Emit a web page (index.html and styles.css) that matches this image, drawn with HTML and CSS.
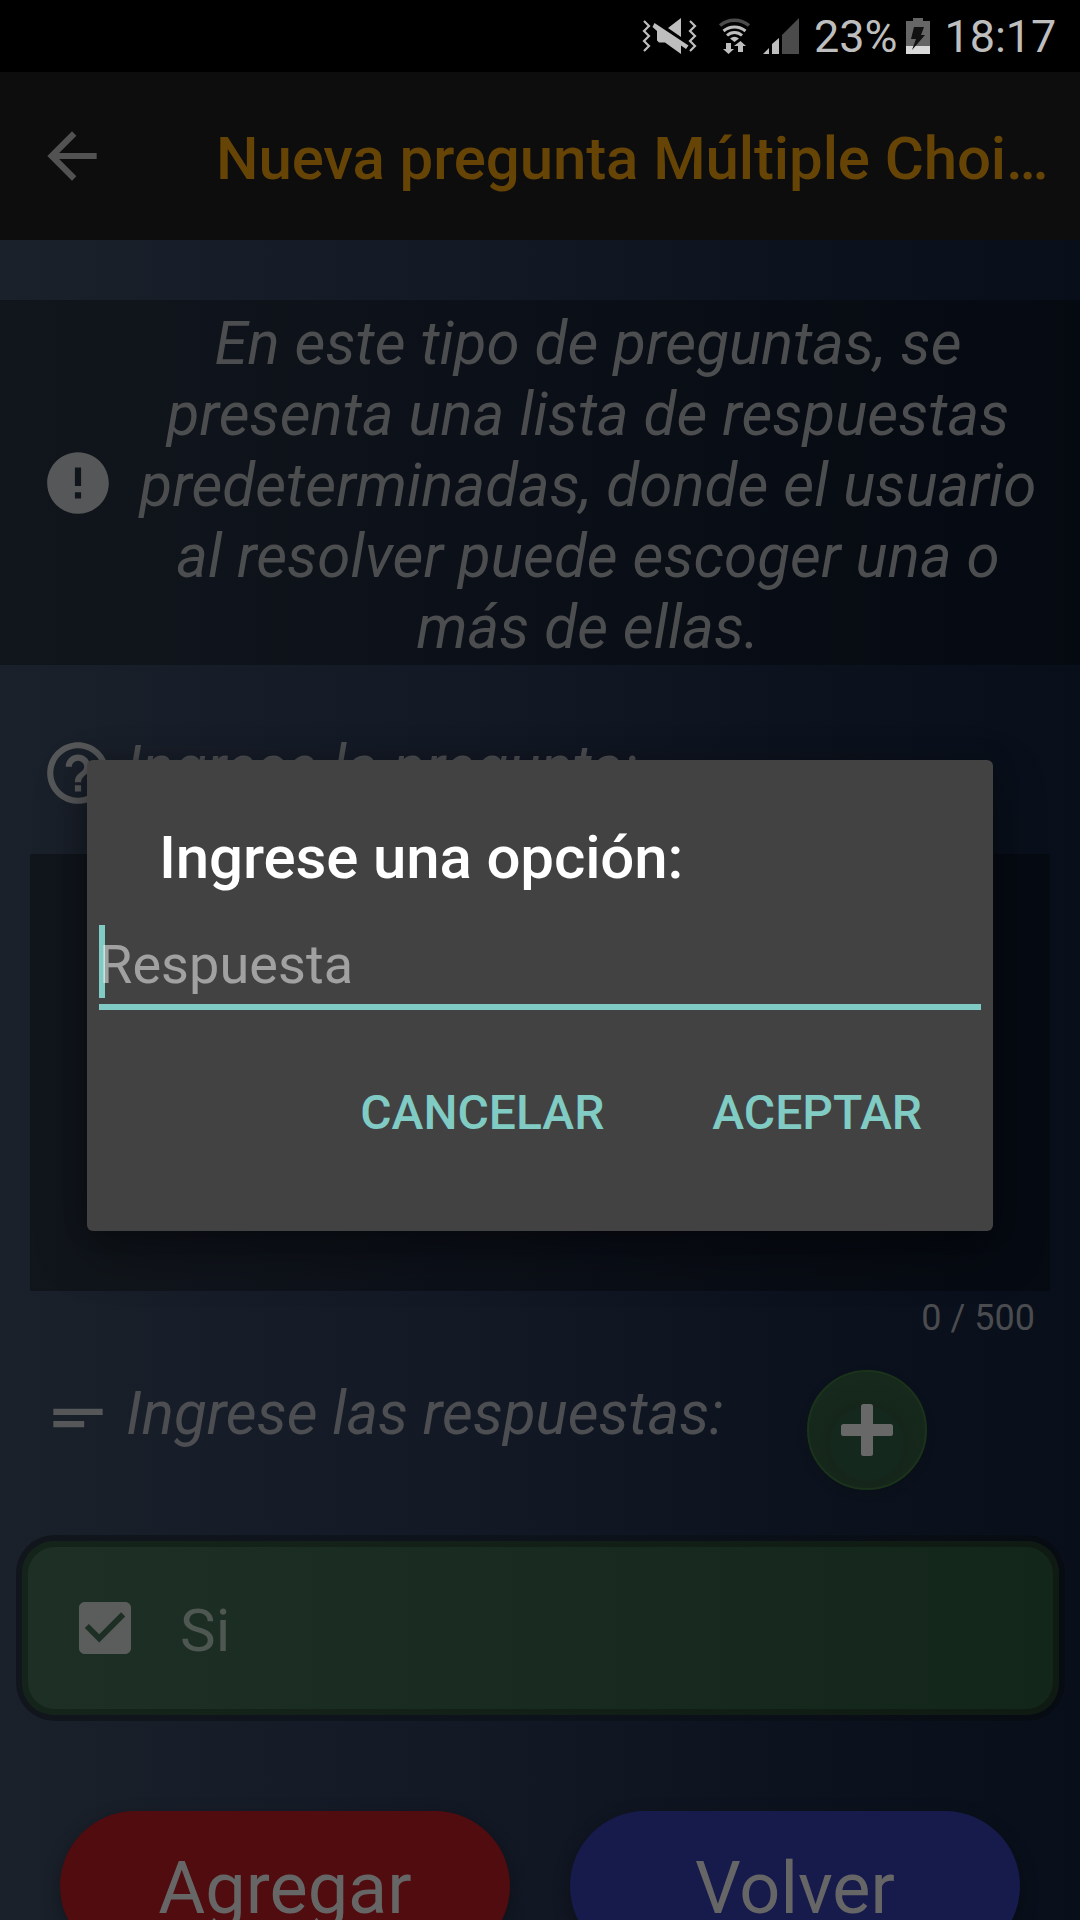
FILE: index.html
```
<!DOCTYPE html>
<html lang="es">
<head>
<meta charset="utf-8">
<title>Nueva pregunta</title>
<link rel="stylesheet" href="styles.css">
</head>
<body>
<div class="screen">
  <div class="status">
    <svg class="status-icons" width="182" height="40" viewBox="0 0 182 40">
      <g fill="none" stroke="#bebebe" stroke-width="2.2">
        <path d="M4 3l5 5-5 5 5 5-5 5 5 5-5 5"/>
        <path d="M50 3l5 5-5 5 5 5-5 5 5 5-5 5"/>
      </g>
      <path fill="#bebebe" d="M41 0v19L28 10zM14.500 5l34 22.500-2.500 3.500-5-3.500V36L25 24.500h-6l-2-2V13l-4.500-4z"/>
      <path d="M80 7.500a22.500 22.500 0 0 1 29 0" fill="none" stroke="#4b4b4b" stroke-width="3.500"/>
      <g fill="none" stroke="#bebebe" stroke-width="3">
        <path d="M83.500 13a17 17 0 0 1 22 0M87 17.500a11 11 0 0 1 15 0"/>
      </g>
      <path fill="#bebebe" d="M90 20.500q4.500-3.500 9 0L94.500 24zM86 25h5v6h3l-5.500 5-5.500-5h3zM98 34v-6h-4l6.500-5 5.500 5h-3v6z"/>
      <path fill="#bebebe" d="M123 36l6-6v6zM132 36V26l7-6v16z"/>
      <path fill="#4b4b4b" d="M142 36V17L159 0v36z"/>
    </svg>
    <span class="battery-text">23%</span>
    <svg class="battery" width="24" height="36" viewBox="0 0 24 36">
      <path fill="#666" d="M7 0h10v3h7v33H0V3h7z"/>
      <path fill="#dadada" d="M0 28h24v8H0z"/>
      <path fill="#111" d="M8 9h10l-3 8h4L6 32l4-11H5z"/>
    </svg>
    <span class="clock">18:17</span>
  </div>

  <header class="appbar">
    <svg class="back" viewBox="0 0 24 24"><path d="M20 11H7.830l5.590-5.590L12 4l-8 8 8 8 1.410-1.410L7.830 13H20v-2z"/></svg>
    <h1 class="appbar-title">Nueva pregunta Múltiple Choi…</h1>
  </header>

  <main class="content">
    <section class="info">
      <svg class="icon" viewBox="0 0 24 24"><path d="M12 2C6.480 2 2 6.480 2 12s4.480 10 10 10 10-4.480 10-10S17.520 2 12 2zm1 15h-2v-2h2v2zm0-4h-2V7h2v6z"/></svg>
      <p class="info-text">En este tipo de preguntas, se<br>presenta una lista de respuestas<br>predeterminadas, donde el usuario<br>al resolver puede escoger una o<br>más de ellas.</p>
    </section>

    <div class="field-head">
      <svg class="icon" viewBox="0 0 24 24"><path d="M11 18h2v-2h-2v2zm1-16C6.480 2 2 6.480 2 12s4.480 10 10 10 10-4.480 10-10S17.520 2 12 2zm0 18c-4.410 0-8-3.590-8-8s3.590-8 8-8 8 3.590 8 8-3.590 8-8 8zm0-14c-2.210 0-4 1.790-4 4h2c0-1.100.9-2 2-2s2 .9 2 2c0 2-3 1.750-3 5h2c0-2.250 3-2.500 3-5 0-2.210-1.790-4-4-4z"/></svg>
      <span class="label">Ingrese la pregunta:</span>
    </div>
    <div class="question-box"></div>
    <div class="counter">0 / 500</div>

    <div class="answers-head">
      <svg class="icon" viewBox="0 0 24 24"><path d="M4 9h16v2H4V9zm0 4h10v2H4v-2z"/></svg>
      <span class="label">Ingrese las respuestas:</span>
      <div class="fab">
        <svg width="54" height="54" viewBox="0 0 54 54"><rect x="21" y="1" width="12" height="52" rx="2.500"/><rect x="1" y="21" width="52" height="12" rx="2.500"/></svg>
      </div>
    </div>

    <div class="answer">
      <div class="answer-ring">
        <div class="answer-body">
          <svg class="check" viewBox="3 3 18 18"><path d="M19 3H5c-1.110 0-2 .9-2 2v14c0 1.100.89 2 2 2h14c1.110 0 2-.9 2-2V5c0-1.100-.89-2-2-2zm-9 14l-5-5 1.410-1.410L10 14.170l7.590-7.590L19 8l-9 9z"/></svg>
          <span class="answer-text">Si</span>
        </div>
      </div>
    </div>

    <div class="actions">
      <div class="btn btn-add">Agregar</div>
      <div class="btn btn-back">Volver</div>
    </div>
  </main>

  <div class="dialog">
    <h2 class="dialog-title">Ingrese una opción:</h2>
    <div class="input"><span class="caret"></span><span class="placeholder">Respuesta</span></div>
    <div class="dialog-actions">
      <span>CANCELAR</span>
      <span>ACEPTAR</span>
    </div>
  </div>
</div>
</body>
</html>
```
FILE: styles.css
```
* { box-sizing: border-box; margin: 0; padding: 0; }
body { background: #000; font-family: Roboto, sans-serif; }
.screen {
  position: relative;
  width: 1080px;
  height: 1920px;
  overflow: hidden;
  display: flex;
  flex-direction: column;
  white-space: nowrap;
}

.status {
  flex: none;
  height: 72px;
  display: flex;
  align-items: center;
  padding-left: 640px;
  background: #000;
  color: #bebebe;
  font-size: 45px;
}
.status-icons { flex: none; margin-top: 4px; margin-right: -8px; }
.battery-text { padding-top: 1px; }
.battery { margin-left: 8px; }
.clock { margin-left: 15px; padding-top: 1px; letter-spacing: -.1px; }

.appbar {
  flex: none;
  height: 168px;
  display: flex;
  align-items: center;
  background: #0d0d0d;
}
.back { width: 74px; height: 74px; margin-left: 35px; fill: #525252; }
.appbar-title {
  margin-left: 107px;
  padding-top: 5px;
  font-size: 60px;
  font-weight: 500;
  line-height: 70px;
  letter-spacing: -.11px;
  color: #664405;
}

.content {
  flex: 1;
  padding-top: 60px;
  background: linear-gradient(90deg, #1a212a 0%, #171d28 20%, #121824 46%, #0d131e 72%, #080f1a 100%);
}
.icon { flex: none; width: 74px; height: 74px; margin-left: 41px; fill: #565758; }
.info {
  height: 365px;
  display: flex;
  align-items: center;
  background: rgba(0, 0, 0, .32);
}
.info-text {
  width: 900px;
  margin-left: 23px;
  padding-top: 5px;
  text-align: center;
  font-size: 60px;
  font-style: italic;
  line-height: 71px;
  letter-spacing: .07px;
  color: #4c4d4f;
}
.label { font-size: 60px; font-style: italic; line-height: 70px; color: #4c4e51; margin-left: 11px; }
.field-head { height: 189px; display: flex; align-items: center; padding-top: 27px; }
.field-head .label { padding-bottom: 10px; }
.question-box { height: 437px; margin: 0 30px; background: rgba(0, 0, 0, .32); }
.counter { height: 79px; padding: 6px 45px 0 0; text-align: right; font-size: 36px; line-height: 42px; color: #4a4c50; }
.answers-head { height: 120px; display: flex; align-items: flex-start; }
.answers-head .icon { margin-top: 11px; }
.answers-head .label { margin-top: 9px; }
.fab {
  width: 120px;
  height: 120px;
  margin-left: auto;
  margin-right: 153px;
  border-radius: 50%;
  border: 2px solid #1b321b;
  background: radial-gradient(circle at 50% 62%, #15281e 0 36px, #15251a 38px, #16291c 66px);
  display: flex;
  align-items: center;
  justify-content: center;
  box-shadow: 0 4px 10px rgba(0, 0, 0, .15);
}
.fab svg { fill: #686868; }

.answer {
  height: 186px;
  margin: 45px 15px 0 16px;
  padding: 6px;
  border-radius: 38px;
  background: linear-gradient(90deg, #11161d, #0d131b 50%, #070c13);
}
.answer-ring { height: 174px; padding: 6px; border-radius: 32px; background: linear-gradient(90deg, #15241b, #0f1b12); }
.answer-body {
  height: 162px;
  border-radius: 27px;
  padding-left: 51px;
  display: flex;
  align-items: center;
  background: linear-gradient(90deg, #1e3025, #192b20 50%, #13261a);
}
.check { width: 52px; height: 52px; fill: #5a5d5b; }
.answer-text { margin-left: 49px; padding-top: 4px; font-size: 60px; color: #4f5752; }

.actions { display: flex; gap: 60px; padding: 90px 60px 0; }
.btn {
  flex: 1;
  height: 150px;
  border-radius: 75px;
  text-align: center;
  font-size: 72px;
  line-height: 156px;
  color: #666;
  box-shadow: 0 6px 18px rgba(0, 0, 0, .3);
}
.btn-add { background: #500c0f; }
.btn-back { background: #171b4c; }

.dialog {
  position: absolute;
  left: 87px;
  top: 760px;
  width: 906px;
  height: 471px;
  padding: 63px 12px 0;
  border-radius: 6px;
  background: #424242;
  box-shadow: 0 20px 50px rgba(0, 0, 0, .35), 0 0 24px rgba(0, 0, 0, .2);
}
.dialog-title { margin-left: 60px; font-size: 60px; font-weight: 500; line-height: 70px; letter-spacing: -.14px; color: #fff; }
.input { height: 85px; margin-top: 32px; display: flex; border-bottom: 6px solid #80cbc4; }
.caret { width: 6px; height: 73px; background: #80cbc4; }
.placeholder { margin-left: -6px; padding-top: 8px; font-size: 54px; line-height: 64px; letter-spacing: .1px; color: rgba(255, 255, 255, .5); }
.dialog-actions {
  display: flex;
  justify-content: flex-end;
  gap: 108px;
  padding: 75px 59px 0 0;
  font-size: 48px;
  font-weight: 500;
  line-height: 56px;
  color: #80cbc4;
}
```
